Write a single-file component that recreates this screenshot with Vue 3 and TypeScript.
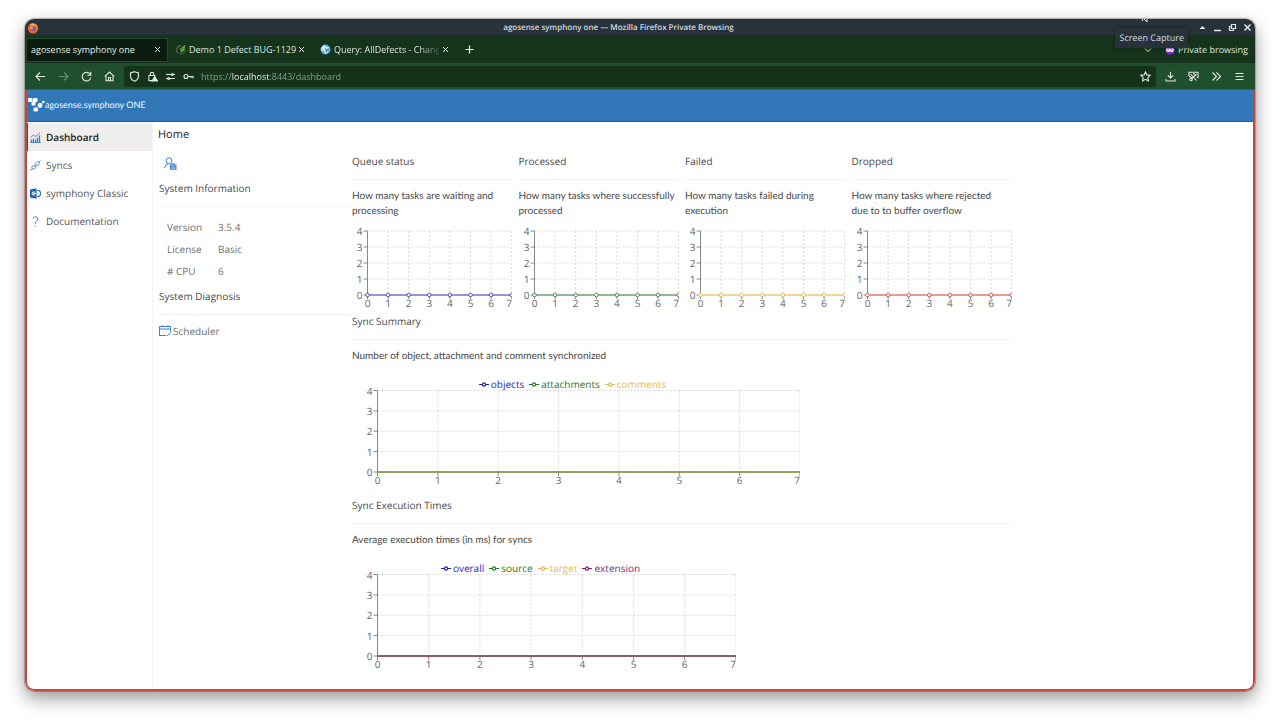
<script setup lang="ts">
interface Series { name: string; color: string }
interface Chart {
  title: string
  text: string
  width: number
  height: number
  left: number
  step: number
  top: number
  rowStep: number
  series: Series[]
  dots?: boolean
}

const blue = '#1f1fb8'
const green = '#1f7a1f'
const amber = '#e9b949'
const purple = '#7b1f7b'

const small = { width: 160, height: 95, left: 15.5, step: 20.6, top: 12, rowStep: 16, dots: true }
const queues: Chart[] = [
  { ...small, title: 'Queue status', text: 'How many tasks are waiting and\nprocessing', series: [{ name: 'queued', color: '#3b35b5' }] },
  { ...small, title: 'Processed', text: 'How many tasks where successfully\nprocessed', series: [{ name: 'processed', color: '#37773a' }] },
  { ...small, title: 'Failed', text: 'How many tasks failed during\nexecution', series: [{ name: 'failed', color: '#e6b93f' }] },
  { ...small, title: 'Dropped', text: 'How many tasks where rejected\ndue to to buffer overflow', series: [{ name: 'dropped', color: '#d0453b' }] },
]
const large = { height: 134, left: 25.5, top: 26.5, rowStep: 20.375 }
const summaries: Chart[] = [
  {
    ...large, width: 448, step: 60.35, title: 'Sync Summary',
    text: 'Number of object, attachment and comment synchronized',
    series: [{ name: 'objects', color: blue }, { name: 'attachments', color: green }, { name: 'comments', color: amber }],
  },
  {
    ...large, width: 384, step: 51.2, title: 'Sync Execution Times',
    text: 'Average execution times (in ms) for syncs',
    series: [{ name: 'overall', color: blue }, { name: 'source', color: green }, { name: 'target', color: amber }, { name: 'extension', color: purple }],
  },
]
const ticks = [0, 1, 2, 3, 4, 5, 6, 7]
const rows = [0, 1, 2, 3, 4]
const info = [['Version', '3.5.4'], ['License', 'Basic'], ['# CPU', '6']]

const xOf = (c: Chart, i: number) => c.left + c.step * i
const yOf = (c: Chart, v: number) => c.top + c.rowStep * (4 - v)
const labelX = (c: Chart, i: number) => Math.min(xOf(c, i), c.width - 3)
</script>

<template>
  <div class="desktop">
    <div class="window">
      <header class="titlebar">
        <svg class="fox" width="12" height="12" viewBox="0 0 12 12"><circle cx="6" cy="6.3" r="5.2" fill="#e8642c" /><path d="M2 2.5C3 3 4 2.8 5 1.500 8 2 10.500 4 10.500 7 9 3.500 7 3 5 4z" fill="#f7b64a" /><circle cx="5.800" cy="6.500" r="2.500" fill="#7253a8" /><path d="M3 5c2-1 3 0 4 1-2 0-2 1-1 2-2 0-3-1-3-3z" fill="#f6a13a" /></svg>
        <span class="window-title">agosense symphony one — Mozilla Firefox Private Browsing</span>
        <div class="controls">
          <button aria-label="Keep above"><svg width="9" height="9" viewBox="0 0 9 9"><path d="M1.500 6h6L4.500 3z" fill="#e3e6e8" /></svg></button>
          <button aria-label="Minimize"><svg width="9" height="9" viewBox="0 0 9 9"><path d="M1 7.500h7" stroke="#e3e6e8" stroke-width="1.400" /></svg></button>
          <button aria-label="Restore"><svg width="9" height="9" viewBox="0 0 9 9" fill="none" stroke="#e3e6e8" stroke-width="1.200"><path d="M3.500 1.500h4v4h-4zM3 3.500H1.500v4h4V6" /></svg></button>
          <button aria-label="Close"><svg width="9" height="9" viewBox="0 0 9 9"><path d="M1.500 1.500l6 6m0-6l-6 6" stroke="#f1f3f4" stroke-width="1.400" /></svg></button>
        </div>
        <svg class="cursor" width="8" height="4" viewBox="0 0 8 4"><path d="M1 0l1 2M3 0l3 3M6 0v3" stroke="#e5e8ea" stroke-width="1" /></svg>
      </header>
      <div class="tooltip" role="tooltip">Screen Capture</div>

      <div class="tabs">
        <div class="tab active">
          <button class="tab-title">agosense symphony one</button>
          <button class="close" aria-label="Close tab"><svg width="7" height="7" viewBox="0 0 7 7"><path d="M1 1l5 5m0-5L1 6" /></svg></button>
        </div>
        <div class="tab">
          <svg width="10" height="10" viewBox="0 0 10 10" fill="none"><path d="M5 .8A4.200 4.200 0 0 0 2 8.200" stroke="#4c6156" stroke-width="1.500" /><path d="M3 9c3 1 6-1 6-4" stroke="#3c5a49" stroke-width="1.200" /><path d="M4 4.500L8.500 1 8 3.500 4.500 6M4.500 7.500L8.500 4.500" stroke="#5ca238" stroke-width="1.300" /></svg>
          <button class="tab-title">Demo 1 Defect BUG-1129</button>
          <button class="close" aria-label="Close tab"><svg width="7" height="7" viewBox="0 0 7 7"><path d="M1 1l5 5m0-5L1 6" /></svg></button>
        </div>
        <div class="tab">
          <svg width="11" height="11" viewBox="0 0 11 11"><circle cx="5.500" cy="5.500" r="5" fill="#62aedb" /><path d="M2 3l3-2 1 2 3 0-2 2 1 3-3 2-1-3-3-1z" fill="#d2edf8" /><path d="M5 4l3 2-2 3z" fill="#3c82be" /></svg>
          <button class="tab-title fade">Query: AllDefects - Change</button>
          <button class="close" aria-label="Close tab"><svg width="7" height="7" viewBox="0 0 7 7"><path d="M1 1l5 5m0-5L1 6" /></svg></button>
        </div>
        <button class="new-tab" aria-label="New tab"><svg width="9" height="9" viewBox="0 0 9 9"><path d="M4.500 .5v8M.5 4.500h8" stroke="#eef3ef" stroke-width="1.200" /></svg></button>
        <button class="list-tabs" aria-label="List all tabs"><svg width="8" height="8" viewBox="0 0 8 8"><path d="M1 2.500l3 3 3-3" fill="none" stroke="#dfe9e1" /></svg></button>
        <span class="private"><svg width="10" height="10" viewBox="0 0 10 10"><circle cx="5" cy="5" r="4.700" fill="#7b28d6" /><path d="M1 4q2-1.500 4 0 2-1.500 4 0 0 3-2.200 3Q5.800 7 5 6 4.200 7 3.200 7 1 7 1 4z" fill="#fff" /><path d="M2.300 4.800h1.500M6.200 4.800h1.500" stroke="#7b28d6" /></svg>Private browsing</span>
      </div>

      <div class="toolbar">
        <div class="nav-buttons">
          <button aria-label="Back"><svg width="11" height="11" viewBox="0 0 11 11"><path d="M10 5.500H1.300M5 1.500l-4 4 4 4" /></svg></button>
          <button aria-label="Forward" disabled><svg width="11" height="11" viewBox="0 0 11 11"><path d="M1 5.500h8.700M6 1.500l4 4-4 4" /></svg></button>
          <button aria-label="Reload"><svg width="11" height="11" viewBox="0 0 11 11"><path d="M9.300 3.500A4.300 4.300 0 1 0 9.800 6.500M9.800 .8v3.500H6.300" /></svg></button>
          <button aria-label="Home"><svg width="11" height="11" viewBox="0 0 11 11"><path d="M.8 5.300l4.700-4.300 4.700 4.300M2 4.800v5h7v-5M4.500 9.500V6.500h2v3" /></svg></button>
        </div>
        <div class="urlbar">
          <svg width="11" height="11" viewBox="0 0 11 11"><path d="M5.500 .7l4 1.300v3q0 3.500-4 5.300-4-1.800-4-5.300V2z" /></svg>
          <svg width="11" height="11" viewBox="0 0 12 12"><path d="M3.500 5V3.500a2 2 0 0 1 4 0V5M6 10.500H2V5h6.500v1" /><path d="M8.500 6l3 5h-6z" fill="#eef3ef" /></svg>
          <svg width="11" height="11" viewBox="0 0 11 11"><path d="M1 3.500h5M8.500 3.500h1.500M1 7.500h1.500M5 7.500h5M8.300 3.500a1 1 0 1 1-2 0 1 1 0 1 1 2 0M4.700 7.500a1 1 0 1 1-2 0 1 1 0 1 1 2 0" /></svg>
          <svg width="11" height="11" viewBox="0 0 11 11"><circle cx="3" cy="5.500" r="2" /><path d="M5 5.500h5v2M8 5.500v1.500" /></svg>
          <input type="text" aria-label="Address" value="https://localhost:8443/dashboard">
          <button aria-label="Bookmark"><svg width="11" height="11" viewBox="0 0 11 11"><path d="M5.500 .9l1.400 3 3.300.4-2.400 2.300.6 3.300-2.900-1.600-2.900 1.600.6-3.300L.8 4.300l3.300-.4z" /></svg></button>
        </div>
        <div class="tools">
          <button aria-label="Downloads"><svg width="11" height="11" viewBox="0 0 11 11"><path d="M5.500 .8v6M2.800 4.300l2.700 2.700 2.700-2.700M1 8v2h9V8" /></svg></button>
          <button aria-label="Screenshot"><svg width="11" height="11" viewBox="0 0 11 11"><path d="M1 5V1.200h9v5.300H9M2.500 3l6 6.500M8.500 3L4 7.500M5 3h2M4.200 8.500a1.200 1.200 0 1 1-2.400 0 1.200 1.200 0 1 1 2.400 0M1 5l3 2" /></svg></button>
          <button aria-label="More tools"><svg width="11" height="11" viewBox="0 0 11 11"><path d="M1.500 1.500l4 4-4 4M5.500 1.500l4 4-4 4" /></svg></button>
          <button aria-label="Menu"><svg width="11" height="11" viewBox="0 0 11 11"><path d="M1.500 2.500h8M1.500 5.500h8M1.500 8.500h8" /></svg></button>
        </div>
      </div>

      <div class="page">
        <div class="brand">
          <svg width="17" height="15" viewBox="0 0 17 15" fill="#fff"><rect x="0" y="1" width="4.500" height="4" rx="1" /><rect x="5" y="1" width="4.500" height="4" rx="1" /><rect x="3.500" y="4.500" width="4" height="4" rx="1" /><rect x="5.500" y="10.500" width="4.500" height="4" rx="1.200" /><circle cx="12" cy="8.500" r="2.400" /><circle cx="15.300" cy="5" r="1.300" /><path d="M13 7l2-2" stroke="#fff" stroke-width=".8" fill="none" /></svg>
          <span>agosense.symphony ONE</span>
        </div>
        <div class="body">
          <nav class="sidebar">
            <a href="#dashboard" class="current">
              <svg width="11" height="11" viewBox="0 0 11 11" fill="none" stroke="#3f7fbf"><path d="M1.500 10.500v-3M3.500 10.500v-4M5.500 10.500v-3M7.500 10.500v-5M9.500 10.500v-7" stroke-width="1.300" /><path d="M.5 5.500l3-2.500 2 1.500L10 .8M.3 10.500h10.500" stroke-width=".9" /></svg>Dashboard
            </a>
            <a href="#syncs">
              <svg width="11" height="11" viewBox="0 0 11 11" fill="none" stroke="#3f7fbf" stroke-width=".9"><path d="M.5 10.500l2-2M10.500 .5l-1.500 1.500M3.500 5L6 7.500 4.800 8.700Q3.500 9.700 2.300 8.700T2.300 6.200zM5 3.700L7.300 6 8.700 4.600Q10 3.300 8.800 2.100T6.300 2.400zM4.500 6l1-1M5.300 6.800l1-1" /></svg>Syncs
            </a>
            <a href="#classic">
              <svg width="11" height="11" viewBox="0 0 11 11"><path d="M0 1.500L6.500 .3v10.400L0 9.500z" fill="#1b67b3" /><path d="M7 2.500h2l1.500 1.500v3L9 8.500H7" fill="none" stroke="#2a72ba" stroke-width="1.200" /><path d="M4.800 4.200Q2 3.200 2 5.500t2.800 1.300M3.500 5.500H6" fill="none" stroke="#fff" /></svg>symphony Classic
            </a>
            <a href="#documentation">
              <svg width="11" height="11" viewBox="0 0 11 11" fill="none" stroke="#3f7fbf"><path d="M2.800 2.500Q3.300 .8 5.300 .8 8 .8 8 3 8 4.200 6.500 5.300 5.300 6.200 5.300 8M5.300 9.300v1.200" /></svg>Documentation
            </a>
          </nav>
          <main>
            <h1>Home</h1>
            <div class="columns">
              <section class="system">
                <svg class="user-icon" width="13" height="13" viewBox="0 0 13 13" fill="none" stroke="#3b80c4"><circle cx="5" cy="3.800" r="3" /><path d="M.6 11Q.9 7.300 4 7" /><rect x="6.500" y="8" width="5.500" height="4.200" fill="#a8c9ea" /><path d="M8 8V6.800h2.500V8M6.500 10h5.500" /></svg>
                <h2>System Information</h2>
                <table>
                  <tbody>
                    <tr v-for="row in info" :key="row[0]"><th scope="row">{{ row[0] }}</th><td>{{ row[1] }}</td></tr>
                  </tbody>
                </table>
                <h2>System Diagnosis</h2>
                <a class="scheduler" href="#scheduler">
                  <svg width="12" height="14" viewBox="0 0 12 14" fill="none" stroke="#3b80c4"><path d="M7 10.500H.5v-9h11V7M.5 4h11" /><path d="M8 11l3.500-3.500" /><path d="M3 .3v1.200M9 .3v1.200" /></svg>Scheduler
                </a>
              </section>

              <div class="metrics">
                <section v-for="c in [...queues, ...summaries]" :key="c.title" :class="{ wide: !c.dots }">
                  <h2>{{ c.title }}</h2>
                  <p>{{ c.text }}</p>
                  <figure>
                    <ul v-if="!c.dots">
                      <li v-for="s in c.series" :key="s.name" :style="{ color: s.color }">
                        <svg width="10" height="5" viewBox="0 0 10 5" fill="none" stroke="currentColor" stroke-width="1.200"><path d="M0 2.500h3M7 2.500h3" /><circle cx="5" cy="2.500" r="1.600" /></svg>{{ s.name }}
                      </li>
                    </ul>
                    <svg class="chart" :width="c.width" :height="c.height" role="img" :aria-label="c.title">
                      <g class="grid">
                        <line v-for="v in rows" :key="'h' + v" :x1="c.left" :x2="xOf(c, 7)" :y1="yOf(c, v)" :y2="yOf(c, v)" />
                        <line v-for="i in ticks" :key="'v' + i" :x1="xOf(c, i)" :x2="xOf(c, i)" :y1="c.top" :y2="yOf(c, 0)" />
                      </g>
                      <g class="axis">
                        <line :x1="c.left" :x2="c.left" :y1="c.top" :y2="yOf(c, 0)" />
                        <line v-for="v in rows" :key="'y' + v" :x1="c.left - 4" :x2="c.left" :y1="yOf(c, v)" :y2="yOf(c, v)" />
                        <line v-for="i in ticks" :key="'x' + i" :x1="xOf(c, i)" :x2="xOf(c, i)" :y1="yOf(c, 0)" :y2="yOf(c, 0) + 4" />
                      </g>
                      <line v-for="s in c.series" :key="s.name" class="series" :x1="c.left" :x2="xOf(c, 7)" :y1="yOf(c, 0)" :y2="yOf(c, 0)" :stroke="s.color" />
                      <g v-if="c.dots" fill="#fff" :stroke="c.series[0].color">
                        <circle v-for="i in ticks" :key="i" :cx="xOf(c, i)" :cy="yOf(c, 0)" r="1.8" stroke-width="0.8" />
                      </g>
                      <g class="labels">
                        <text v-for="v in rows" :key="'ly' + v" :x="c.left - 5" :y="yOf(c, v) + 4" text-anchor="end">{{ v }}</text>
                        <text v-for="i in ticks" :key="'lx' + i" :x="labelX(c, i)" :y="yOf(c, 0) + 12" text-anchor="middle">{{ i }}</text>
                      </g>
                    </svg>
                  </figure>
                </section>
              </div>
            </div>
          </main>
        </div>
      </div>
    </div>
  </div>
</template>

<style>
body { margin: 0; background: #fff; }
</style>

<style scoped>
* { box-sizing: border-box; }
.desktop {
  min-height: 100vh;
  padding: 19px 25px 31px;
  display: flex;
  font-family: "Open Sans", "Noto Sans", sans-serif;
  font-size: 10px;
  line-height: 15px;
  color: #484848;
  text-rendering: geometricPrecision;
}
button { border: 0; padding: 0; background: none; color: inherit; font: inherit; display: flex; align-items: center; }
svg { flex: none; display: block; }
.window {
  position: relative;
  flex: 1;
  min-width: 0;
  display: flex;
  flex-direction: column;
  border-radius: 9px;
  overflow: hidden;
  background: #fff;
  box-shadow: 0 0 1px 1px rgba(0, 0, 0, .25), 0 7px 18px rgba(0, 0, 0, .42);
}
.titlebar {
  position: relative;
  height: 16px;
  background: #27323a;
  display: flex;
  align-items: center;
  padding: 0 3px 0 2px;
}
.fox { margin-top: 2px; }
.window-title { flex: 1; text-align: center; font-size: 8px; font-weight: 600; color: #d6dce0; padding-top: 1px; }
.controls { display: flex; gap: 6px; justify-content: flex-end; padding-top: 1px; }
.cursor { position: absolute; top: 0; right: 106px; }
.tooltip {
  position: absolute;
  top: 9px;
  right: 67px;
  z-index: 2;
  height: 20px;
  padding: 0 4px;
  background: #27323a;
  color: #d9dee1;
  font-size: 9px;
  line-height: 20px;
  box-shadow: 0 0 3px rgba(0, 0, 0, .4);
}
.tabs {
  height: 28px;
  padding: 3px 7px 2px 2px;
  background: #15341b;
  color: #dde7df;
  font-size: 9px;
  display: flex;
  align-items: center;
}
.tab { display: flex; align-items: center; gap: 3px; height: 22px; width: 144px; padding: 0 6px 0 9px; }
.tab.active { width: 140px; background: #0b1b10; box-shadow: 0 0 0 1px #25492c; padding: 0 6px 0 4px; color: #e9efea; }
.tab-title { flex: 1; min-width: 0; white-space: nowrap; }
.fade { mask-image: linear-gradient(90deg, #000 80%, rgba(0, 0, 0, .15)); }
.close svg { stroke: #dfe9e1; stroke-width: 1; }
.new-tab { margin-left: 10px; }
.list-tabs { margin-left: auto; }
.private { display: flex; align-items: center; gap: 3px; margin-left: 13px; }
.toolbar {
  height: 27px;
  padding: 3px 10px 3px 10px;
  background: #1f4f2d;
  display: flex;
  align-items: center;
  border-bottom: 1px solid #2f6556;
}
.toolbar svg { fill: none; stroke: #dfe9e1; stroke-width: 1.1; }
.nav-buttons { display: flex; gap: 12px; }
.nav-buttons button:disabled { opacity: .4; }
.urlbar {
  flex: 1;
  min-width: 0;
  height: 21px;
  margin-left: 9px;
  padding: 0 5px;
  display: flex;
  align-items: center;
  gap: 7px;
  background: #15331a;
  border-radius: 2px;
}
.urlbar input {
  flex: 1;
  min-width: 0;
  border: 0;
  padding: 0;
  font: inherit;
  font-size: 9px;
  color: transparent;
  background: linear-gradient(90deg, #8ba18e 31px, #fff 31px, #fff 69px, #8ba18e 69px);
  background-clip: text;
}
.tools { display: flex; gap: 12px; margin-left: 9px; }
.page {
  flex: 1;
  display: flex;
  flex-direction: column;
  border: solid #c6483a;
  border-width: 0 2px 2px;
  border-radius: 0 0 9px 9px;
}
.brand {
  height: 32px;
  padding: 0 1px 2px;
  display: flex;
  align-items: center;
  background: #3278b8;
  border-bottom: 1px solid #1d6298;
  color: #f0f7fc;
  font-family: Lato, "Open Sans", sans-serif;
  font-size: 9px;
}
.body { flex: 1; display: flex; }
.sidebar { width: 126px; border-right: 1px solid #f4f4f4; padding-top: 1px; }
.sidebar a {
  height: 28px;
  padding-left: 3px;
  display: flex;
  align-items: center;
  gap: 5px;
  color: #555;
  text-decoration: none;
}
.sidebar a.current { background: #efeeec; color: #1c1c1c; font-weight: 600; box-shadow: inset 1px 0 #4540a8; }
main { flex: 1; min-width: 0; padding: 5px; }
h1 { margin: 0; font-size: 11px; line-height: 15px; font-weight: 500; color: #222; }
.columns { display: flex; padding-top: 12px; }
.system { flex: none; width: 193px; padding: 3px 0 0 1px; }
.user-icon { margin: 0 0 11px 5px; }
h2 { margin: 0; padding-bottom: 10px; border-bottom: 1px solid #f2f2f2; font-size: 10px; line-height: 15px; font-weight: 400; }
table { border-collapse: collapse; margin: 9px 0 7px 8px; color: #707070; }
th, td { padding: 4px 0 3px; font-weight: 400; text-align: left; }
th { width: 51px; }
.scheduler { display: flex; align-items: center; gap: 2px; padding-top: 9px; color: #707070; text-decoration: none; }
.metrics { flex: none; width: 660px; display: grid; grid-template-columns: repeat(4, 1fr); column-gap: 6px; margin-left: 1px; }
.metrics section { min-width: 0; }
.wide { grid-column: 1 / -1; }
p { margin: 9px 0 0; white-space: pre; font-family: Lato, "Open Sans", sans-serif; }
figure { margin: 0; display: grid; justify-content: start; }
figure > * { grid-area: 1 / 1; }
ul { margin: 0; padding: 13px 7px 0 0; list-style: none; display: flex; justify-content: center; align-items: flex-start; gap: 5px; }
li { display: flex; align-items: center; gap: 2px; }
.grid { stroke: #d8d8d8; stroke-dasharray: 2 2; }
.axis { stroke: #888; }
.labels { fill: #666; font-size: 10px; }
.series { stroke-width: 1; }
</style>
